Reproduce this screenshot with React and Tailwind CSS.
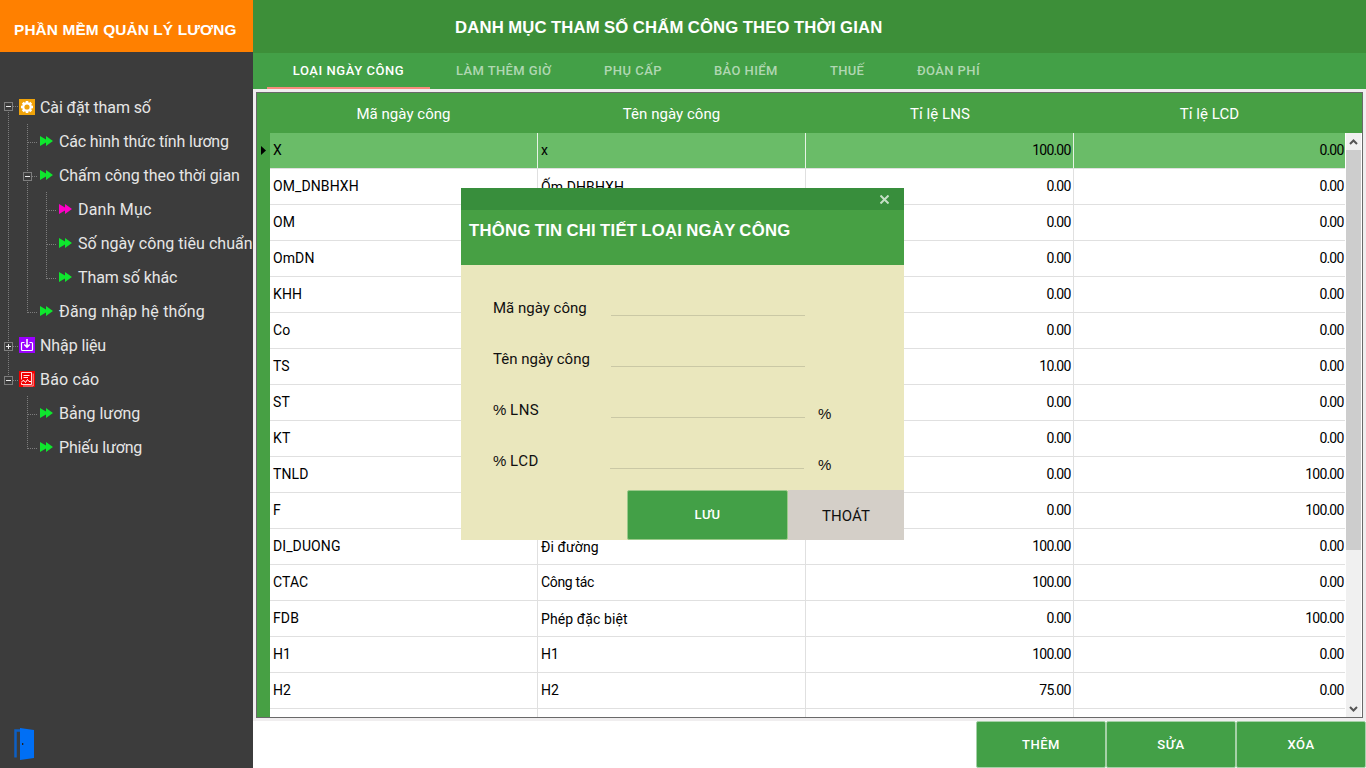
const GREEN = "#0fe62e";
const PINK = "#ff00c8";

const TREE = [
  { gutter: ["first"], icon: "gear", label: "Cài đặt tham số", track: "tracking-[-0.12px]" },
  { gutter: ["line", "tee"], icon: "arrow", color: GREEN, label: "Các hình thức tính lương", track: "tracking-[-0.16px]" },
  { gutter: ["line", "minus"], icon: "arrow", color: GREEN, label: "Chấm công theo thời gian", track: "tracking-[-0.06px]" },
  { gutter: ["line", "line", "tee"], icon: "arrow", color: PINK, label: "Danh Mục", track: "tracking-[0.2px]" },
  { gutter: ["line", "line", "tee"], icon: "arrow", color: GREEN, label: "Số ngày công tiêu chuẩn", track: "tracking-[0.04px]" },
  { gutter: ["line", "line", "corner"], icon: "arrow", color: GREEN, label: "Tham số khác", track: "tracking-[-0.09px]" },
  { gutter: ["line", "corner"], icon: "arrow", color: GREEN, label: "Đăng nhập hệ thống", track: "tracking-[0.18px]" },
  { gutter: ["plus"], icon: "import", label: "Nhập liệu", track: "tracking-[-0.1px]" },
  { gutter: ["last"], icon: "report", label: "Báo cáo", track: "tracking-[0.2px]" },
  { gutter: ["none", "tee"], icon: "arrow", color: GREEN, label: "Bảng lương", track: "tracking-[0px]" },
  { gutter: ["none", "corner"], icon: "arrow", color: GREEN, label: "Phiếu lương", track: "tracking-[-0.15px]" },
];

const TABS = [
  { label: "LÀM THÊM GIỜ", cls: "w-[96px] tracking-[0.4px]" },
  { label: "PHỤ CẤP", cls: "w-[58px] tracking-[0.5px]" },
  { label: "BẢO HIỂM", cls: "w-[64px] tracking-[0.4px]" },
  { label: "THUẾ", cls: "w-[35px] tracking-[0.3px]" },
  { label: "ĐOÀN PHÍ", cls: "w-[64px] tracking-[0.4px]" },
];

const HEADS = [
  { label: "Mã ngày công", cls: "w-[267px]" },
  { label: "Tên ngày công", cls: "w-[269px]" },
  { label: "Tỉ lệ LNS", cls: "w-[268px]" },
  { label: "Tỉ lệ LCD", cls: "w-[271px]" },
];

const ROWS = [
  ["OM_DNBHXH", "Ốm DHBHXH", "0.00", "0.00"],
  ["OM", "", "0.00", "0.00"],
  ["OmDN", "", "0.00", "0.00"],
  ["KHH", "", "0.00", "0.00"],
  ["Co", "", "0.00", "0.00"],
  ["TS", "", "10.00", "0.00"],
  ["ST", "", "0.00", "0.00"],
  ["KT", "", "0.00", "0.00"],
  ["TNLD", "", "0.00", "100.00"],
  ["F", "", "0.00", "100.00"],
  ["DI_DUONG", "Đi đường", "100.00", "0.00"],
  ["CTAC", "Công tác", "100.00", "0.00"],
  ["FDB", "Phép đặc biệt", "0.00", "100.00"],
  ["H1", "H1", "100.00", "0.00"],
  ["H2", "H2", "75.00", "0.00"],
];

const LOWERED = ["Ốm DHBHXH", "Đi đường", "Phép đặc biệt"];

function Gutter({ kind }) {
  const dots = { stroke: "#7d7d7d", strokeWidth: 1, strokeDasharray: "1 1" };
  const boxed = ["first", "minus", "plus", "last"].includes(kind);
  const cy = kind === "first" ? 16.5 : 18.5;
  const up = ["line", "tee", "corner", "minus", "plus", "last"].includes(kind);
  const down = ["line", "tee", "minus", "first", "plus"].includes(kind);
  return (
    <svg width="19" height="34" className="shrink-0" shapeRendering="crispEdges" fill="none">
      {up && <line x1="8.5" y1="0" x2="8.5" y2={cy} {...dots} />}
      {down && <line x1="8.5" y1="18" x2="8.5" y2="34" {...dots} />}
      {kind !== "line" && kind !== "none" && <line x1="9" y1={cy} x2="19" y2={cy} {...dots} />}
      {boxed && (
        <>
          <rect x="4.5" y={cy - 4} width="8" height="8" fill="#3c3c3c" stroke="#7d7d7d" />
          <path d={`M6 ${cy}H11`} stroke="#ececec" />
          {kind === "plus" && <path d={`M8.5 ${cy - 2.5}V${cy + 2.5}`} stroke="#ececec" />}
        </>
      )}
    </svg>
  );
}

function TreeIcon({ name, color }) {
  if (name === "arrow")
    return (
      <svg width="16" height="16" viewBox="0 0 16 16" className="shrink-0" fill={color}>
        <path d="M2 3 L8 6.4 V3 L15 8 L8 13 V9.6 L2 13 Z" />
      </svg>
    );
  if (name === "gear")
    return (
      <svg width="16" height="16" viewBox="0 0 16 16" className="shrink-0">
        <rect width="16" height="16" fill="#f0a30a" />
        <g fill="#fff">
          <rect x="6.7" y="2" width="2.6" height="12" />
          <rect x="6.7" y="2" width="2.6" height="12" transform="rotate(45 8 8)" />
          <rect x="6.7" y="2" width="2.6" height="12" transform="rotate(90 8 8)" />
          <rect x="6.7" y="2" width="2.6" height="12" transform="rotate(135 8 8)" />
          <circle cx="8" cy="8" r="4.8" />
        </g>
        <circle cx="8" cy="8" r="2.6" fill="#f0a30a" />
      </svg>
    );
  if (name === "import")
    return (
      <svg width="16" height="16" viewBox="0 0 16 16" className="shrink-0" fill="none" stroke="#fff" strokeWidth="1.2">
        <rect width="16" height="16" fill="#9b00ff" stroke="none" />
        <path d="M5.5 5.5H3.4Q2.5 5.5 2.5 6.4V12.6Q2.5 13.5 3.4 13.5H12.6Q13.5 13.5 13.5 12.6V6.4Q13.5 5.5 12.6 5.5H10.5" />
        <path d="M8 2V10M5.3 7.5L8 10.2L10.7 7.5" strokeWidth="1.5" />
      </svg>
    );
  return (
    <svg width="16" height="16" viewBox="0 0 16 16" className="shrink-0" fill="none" stroke="#fff" strokeWidth="1">
      <rect width="16" height="16" fill="#f00000" stroke="none" />
      <path d="M2.5 8.5V1.5H12.5V13.5H2.5V11.5" strokeOpacity=".85" />
      <path d="M14.2 2.5V15H4" strokeOpacity=".6" />
      <path d="M4.5 4.5H10.5M4.5 6.5H9" strokeOpacity=".9" />
      <path d="M2.5 10.5L5 9.5L6.5 11.5L8.5 8.5L10 10.5H12" />
    </svg>
  );
}

function Sidebar() {
  return (
    <aside className="flex w-[253px] shrink-0 flex-col overflow-hidden bg-[#3c3c3c]">
      <div className="flex h-[52px] items-center bg-[#ff8000] pt-[8px] pl-[14px] font-['Liberation_Sans',sans-serif] text-[15.4px] font-bold tracking-[0.12px] whitespace-nowrap text-white">
        PHẦN MỀM QUẢN LÝ LƯƠNG
      </div>
      <ul className="mt-[38px]">
        {TREE.map((n) => (
          <li key={n.label} className="flex h-[34px]">
            {n.gutter.map((g, i) => (
              <Gutter key={i} kind={g} />
            ))}
            <div className="flex pt-[9px]">
              <TreeIcon name={n.icon} color={n.color} />
              <span className={`pl-[5px] text-[16px] leading-[18px] whitespace-nowrap text-[#e6e6e6] ${n.track}`}>{n.label}</span>
            </div>
          </li>
        ))}
      </ul>
      <svg width="22" height="34" viewBox="0 0 22 34" className="mt-auto mb-[7px] ml-[13px]">
        <path d="M7 3.5H2.5V30.5" fill="none" stroke="#0d5fc4" strokeWidth="2.5" />
        <path d="M7 1L21 3V31L7 33Z" fill="#006ff5" />
        <rect x="9" y="16" width="1.3" height="2" fill="#222" />
      </svg>
    </aside>
  );
}

function Cell({ children, num, last, selected, lowered }) {
  const width = last ? "w-[275px]" : "w-[268px]";
  const border = selected ? "border-[#e6f3e5]" : "border-[#e0e0e0]";
  return (
    <div
      className={`flex h-full shrink-0 items-center ${width} ${last ? "" : "border-r"} ${border} ${
        num ? `justify-end tracking-[-0.8px] ${last ? "pr-[5.5px]" : "pr-[2.5px]"}` : "pl-[3px] tracking-[0.1px]"
      } ${lowered ? "pt-px" : "pb-px"}`}
    >
      {children}
    </div>
  );
}

function Grid() {
  return (
    <div className="mx-[3px] mt-[3px] flex h-[626px] flex-col overflow-hidden border border-[#696969] bg-white">
      <div className="flex h-10 shrink-0 bg-[#47a044] pl-[13px] text-[15px] tracking-[0.04px] text-white">
        {HEADS.map((h) => (
          <div key={h.label} className={`flex items-center justify-center pt-[2px] ${h.cls}`}>
            {h.label}
          </div>
        ))}
      </div>
      <div className="flex min-h-0 flex-1 text-[14px] leading-[18px] text-black">
        <div className="w-[13px] shrink-0 bg-[#47a044]">
          <svg width="13" height="35" fill="#000">
            <path d="M4 13L9 17.5L4 22Z" />
          </svg>
        </div>
        <div className="flex w-[1076px] shrink-0 flex-col overflow-hidden">
          <div className="flex h-9 w-[1075px] shrink-0 overflow-hidden border-b border-[#e0e0e0] bg-[#6abc68]">
            <Cell selected><span className="-mt-px">X</span></Cell>
            <Cell selected><span className="-mt-px">x</span></Cell>
            <Cell selected num><span className="-mt-px">100.00</span></Cell>
            <Cell selected num last><span className="-mt-px">0.00</span></Cell>
          </div>
          {ROWS.map((r) => (
            <div key={r[0]} className="flex h-9 w-[1075px] shrink-0 border-b border-[#e0e0e0]">
              <Cell>{r[0]}</Cell>
              <Cell lowered={LOWERED.includes(r[1])}>
                {r[1] === "Công tác" ? <span className="tracking-[-0.35px]">{r[1]}</span> : r[1]}
              </Cell>
              <Cell num>{r[2]}</Cell>
              <Cell num last>{r[3]}</Cell>
            </div>
          ))}
          <div className="flex flex-1">
            <Cell /><Cell /><Cell /><Cell last />
          </div>
        </div>
        <div className="flex w-[15px] shrink-0 flex-col bg-[#f0f0f0]">
          <svg width="15" height="17" fill="none" stroke="#555" strokeWidth="2">
            <path d="M4 11L7.5 7.5L11 11" />
          </svg>
          <div className="h-[400px] bg-[#cdcdcd]" />
          <svg width="15" height="17" className="mt-auto" fill="none" stroke="#555" strokeWidth="2">
            <path d="M4 7L7.5 10.5L11 7" />
          </svg>
        </div>
      </div>
    </div>
  );
}

const FIELDS = [
  { label: "Mã ngày công", line: "w-[194px]" },
  { label: "Tên ngày công", line: "w-[194px]" },
  { label: "LNS", percent: true, line: "w-[194px]" },
  { label: "LCD", percent: true, line: "mr-px -ml-px w-[194px]" },
];

function Percent({ className = "" }) {
  return <span className={`font-['Liberation_Sans',sans-serif] ${className}`}>%</span>;
}

function Dialog() {
  return (
    <div className="absolute top-[188px] left-[461px] flex h-[352px] w-[443px] flex-col bg-[#eae7bd]">
      <div className="flex h-[22px] items-center justify-end bg-[#388e3c] pr-[15px]">
        <svg width="9" height="9" className="mt-px" stroke="#c5dfc6" strokeWidth="2">
          <path d="M0.5 0.5L8.5 8.5M8.5 0.5L0.5 8.5" />
        </svg>
      </div>
      <div className="h-[55px] bg-[#47a044] pt-[11px] pl-[8px] font-['Liberation_Sans',sans-serif] text-[16.7px] leading-[20px] font-bold tracking-[0.28px] whitespace-nowrap text-white [word-spacing:-0.9px]">
        THÔNG TIN CHI TIẾT LOẠI NGÀY CÔNG
      </div>
      <div className="pl-[32px] text-[15px] leading-[18px] text-[#101010]">
        {FIELDS.map((f) => (
          <div key={f.label} className="flex h-[51px] items-end">
            <span className="mb-[-1px] w-[118px] whitespace-nowrap">
              {f.percent && <Percent />}
              {f.percent && " "}
              {f.percent ? <span className="tracking-[0.5px]">{f.label}</span> : f.label}
            </span>
            <span className={`h-px bg-[#cac8a5] ${f.line}`} />
            {f.percent && <Percent className="mb-[-5px] ml-[13px]" />}
          </div>
        ))}
      </div>
      <div className="mt-auto flex h-[50px] justify-end">
        <button className="w-[161px] rounded-[2px] border border-[#9bc98a] bg-[#43a047] text-[13px] font-medium tracking-[0.4px] text-white">LƯU</button>
        <button className="w-[116px] bg-[#d4cfc8] pt-[3px] text-[15px] tracking-[0.09px] text-[#101010]">THOÁT</button>
      </div>
    </div>
  );
}

export default function App() {
  return (
    <div className="relative flex h-[768px] w-[1366px] overflow-hidden bg-white font-[Roboto,'Liberation_Sans',sans-serif]">
      <Sidebar />
      <main className="flex min-w-0 flex-1 flex-col">
        <header className="h-[53px] bg-[#3d8f39] pt-[18px] pl-[202px] font-['Liberation_Sans',sans-serif] text-[16.7px] leading-[20px] font-bold tracking-[0.2px] whitespace-nowrap text-white [word-spacing:-0.7px]">
          DANH MỤC THAM SỐ CHẤM CÔNG THEO THỜI GIAN
        </header>
        <nav className="flex h-9 bg-[#43a047] pl-[14px] text-[13px] font-medium whitespace-nowrap text-[#b0d7b2]">
          <div className="flex w-[163px] items-center justify-center border-b-2 border-[#f88c7c] pt-px tracking-[0.56px] text-white">
            LOẠI NGÀY CÔNG
          </div>
          <div className="flex items-center gap-[52px] pb-px pl-[26px]">
            {TABS.map((t) => (
              <div key={t.label} className={t.cls}>{t.label}</div>
            ))}
          </div>
        </nav>
        <div className="h-[632px] bg-[#f0eeef]">
          <Grid />
        </div>
        <footer className="flex flex-1 justify-end bg-white text-[13px] font-medium tracking-[0.55px] text-white">
          {["THÊM", "SỬA", "XÓA"].map((b) => (
            <button key={b} className="w-[130px] rounded-[2px] border border-[#a5d1a7] bg-[#43a047]">
              {b}
            </button>
          ))}
        </footer>
      </main>
      <Dialog />
    </div>
  );
}
